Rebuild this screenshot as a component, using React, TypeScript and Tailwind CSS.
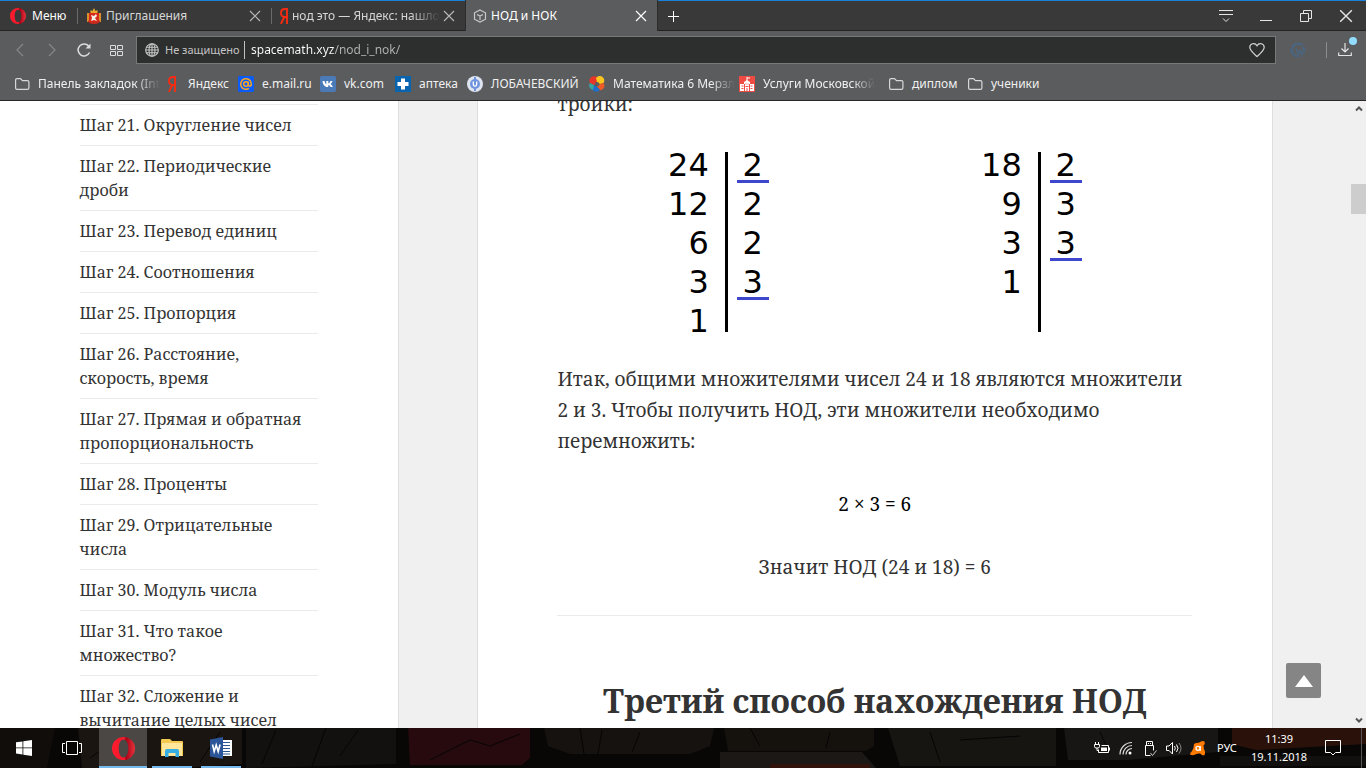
import type { ReactNode } from "react"
import clsx from "clsx"

const steps = [
    "Шаг 21. Округление чисел",
    "Шаг 22. Периодические дроби",
    "Шаг 23. Перевод единиц",
    "Шаг 24. Соотношения",
    "Шаг 25. Пропорция",
    "Шаг 26. Расстояние, скорость, время",
    "Шаг 27. Прямая и обратная пропорциональность",
    "Шаг 28. Проценты",
    "Шаг 29. Отрицательные числа",
    "Шаг 30. Модуль числа",
    "Шаг 31. Что такое множество?",
    "Шаг 32. Сложение и вычитание целых чисел",
]

/* ---------- icons ---------- */

const CloseIcon = ({ className }: { className?: string }) => (
    <svg className={clsx("h-3 w-3 shrink-0", className)} viewBox="0 0 12 12" stroke="currentColor" fill="none">
        <path d="M1 1l10 10M11 1L1 11" strokeWidth="1.2" />
    </svg>
)

const OperaIcon = ({ className, id }: { className?: string; id: string }) => (
    <svg className={className} viewBox="0 0 24 24">
        <defs>
            <linearGradient id={id} x1="0" y1="0" x2="1" y2="0">
                <stop offset="0" stopColor="#ff1b2d" />
                <stop offset="0.550" stopColor="#f01a2b" />
                <stop offset="0.600" stopColor="#a70014" />
                <stop offset="1" stopColor="#e8323c" />
            </linearGradient>
        </defs>
        <path
            d="M12 0a12 12 0 1 0 0 24a12 12 0 1 0 0-24zM12 2.700c3.200 0 5 4.200 5 9.300s-1.800 9.300-5 9.300-5-4.200-5-9.300 1.800-9.300 5-9.300z"
            fill={`url(#${id})`}
            fillRule="evenodd"
        />
    </svg>
)

const YandexIcon = () => (
    <svg className="h-4 w-2 shrink-0" viewBox="0 0 8 16" fill="none" stroke="#f52c12" strokeWidth="1.900">
        <path d="M7 16V1H5C2.300 1 1 2.600 1 5s1.300 4 3.500 4H7M4.300 9L.9 16" />
    </svg>
)

const FolderIcon = () => (
    <svg className="h-4 w-4 shrink-0" viewBox="0 0 16 16" fill="none" stroke="#d8d8d8" strokeWidth="1.200">
        <path d="M1.600 4q0-1.400 1.400-1.400h3.500l2 2H13.500q1.400 0 1.400 1.400v6q0 1.400-1.400 1.400H3q-1.400 0-1.400-1.400z" />
    </svg>
)

const CrestIcon = () => (
    <svg className="h-4 w-4 shrink-0" viewBox="0 0 16 16">
        <path d="M4.500 5V2l2 1L8 0l1.500 3 2-1v3z" fill="#e8a92c" />
        <path d="M1 5h3v9H1zM12 5h3v9h-3z" fill="#d9912c" />
        <path d="M3 5h10v9l-5 2-5-2z" fill="#d8281b" />
        <path d="M5 7l3 1 2-2 1 2-2 2 2 3-3-1-3 1 1-3z" fill="#f3eee6" />
        <path d="M2 13l3 2h6l3-2" stroke="#c32b20" strokeWidth="1.500" fill="none" />
    </svg>
)

const CubeIcon = () => (
    <svg className="h-[14px] w-[14px] shrink-0" viewBox="0 0 14 14" fill="none" stroke="#c9c9c9" strokeWidth="1.200">
        <path d="M7 1l5.500 2.800v6.400L7 13l-5.500-2.800V3.800zM4 5.500l3 1.500 3-1.500M7 7v4" />
    </svg>
)

const MailIcon = () => (
    <svg className="h-4 w-4 shrink-0" viewBox="0 0 16 16" fill="none" stroke="#ffa51f" strokeWidth="1.500">
        <rect width="16" height="16" rx="1.500" fill="#0b5cf7" stroke="none" />
        <circle cx="8" cy="8" r="2.300" />
        <path d="M10.300 5.700v3q0 1.400 1.200 1.400c1.400 0 1.800-1.400 1.800-2.100A5.300 5.300 0 1 0 11 12.400" />
    </svg>
)

const VkIcon = () => (
    <svg className="h-4 w-4 shrink-0" viewBox="0 0 16 16">
        <rect width="16" height="16" rx="2" fill="#4a7ab8" />
        <path d="M2.500 5h2c.3 1.500 1 3 1.800 3.300V5h2v2.600c1-.3 1.700-1.400 2.200-2.600h2c-.2 1-1.200 2.300-2 3 .9.600 1.900 1.700 2.300 3h-2.200c-.4-.9-1.200-1.800-2.300-2v2h-.8C4.700 11 2.800 8.600 2.500 5z" fill="#fff" />
    </svg>
)

const PharmacyIcon = () => (
    <svg className="h-4 w-4 shrink-0" viewBox="0 0 16 16">
        <rect width="16" height="16" fill="#0a65ae" />
        <path d="M6 2.500h4V6h3.500v4H10v3.500H6V10H2.500V6H6z" fill="#fff" />
    </svg>
)

const LobIcon = () => (
    <svg className="h-4 w-4 shrink-0" viewBox="0 0 16 16">
        <circle cx="8" cy="8" r="8" fill="#dfe4f1" />
        <circle cx="8" cy="8" r="5" fill="#6f93dd" />
        <path d="M8 1v14" stroke="#6f93dd" strokeWidth="2" />
        <path d="M6.300 5.500v3q0 1.700 1.700 1.700t1.700-1.700v-3" fill="none" stroke="#fff" strokeWidth="1.300" />
    </svg>
)

const SwirlIcon = () => (
    <svg className="h-4 w-4 shrink-0" viewBox="0 0 16 16">
        <path d="M1 7a4.500 4.500 0 0 1 8-4.500L8 6 5 9z" fill="#e8352a" />
        <path d="M7 2a4.500 4.500 0 0 1 7.500 5L11 8 8 6z" fill="#f7c51e" />
        <path d="M14.500 7a4.500 4.500 0 0 1-5 7L8 11l3-3z" fill="#ee5a28" />
        <path d="M11 13.500A4.500 4.500 0 0 1 3 13l2-4 3 2z" fill="#1d6fc9" />
        <path d="M4 14A4.500 4.500 0 0 1 1 7l4 2z" fill="#37a6a0" />
        <circle cx="8" cy="8" r="2" fill="#5b5c5e" />
    </svg>
)

const SchoolIcon = () => (
    <svg className="h-4 w-4 shrink-0" viewBox="0 0 16 16">
        <rect width="16" height="16" fill="#ee4b45" />
        <path d="M1 8h4V6l3-2 3 2v2h4v7H1z" fill="#fff" />
        <path d="M8 5V1M8 2h3" stroke="#fff" />
        <path d="M2.500 10h2M2.500 12.500h2M6.500 8h1M8.500 8h1M6.500 10.500h3M11.500 10h2M11.500 12.500h2M8 12v3M5.500 8v7M10.500 8v7" stroke="#ee4b45" />
    </svg>
)

const bookmarks: { label: string; icon: ReactNode; width: string; fade?: boolean }[] = [
    { label: "Панель закладок (Int", icon: <FolderIcon />, width: "w-[150px]", fade: true },
    { label: "Яндекс", icon: <YandexIcon />, width: "w-[74px]" },
    { label: "e.mail.ru", icon: <MailIcon />, width: "w-[82px]" },
    { label: "vk.com", icon: <VkIcon />, width: "w-[75px]" },
    { label: "аптека", icon: <PharmacyIcon />, width: "w-[72px]" },
    { label: "ЛОБАЧЕВСКИЙ", icon: <LobIcon />, width: "w-[122px]" },
    { label: "Математика 6 Мерзл", icon: <SwirlIcon />, width: "w-[150px]", fade: true },
    { label: "Услуги Московской", icon: <SchoolIcon />, width: "w-[149px]", fade: true },
    { label: "диплом", icon: <FolderIcon />, width: "w-[79px]" },
    { label: "ученики", icon: <FolderIcon />, width: "w-[79px]" },
]

const fadeMask = "[mask-image:linear-gradient(to_right,black_80%,transparent)]"

/* ---------- browser chrome ---------- */

const Tab = ({ icon, title, width, active }: { icon: ReactNode; title: string; width: string; active?: boolean }) => (
    <div
        className={clsx(
            "flex items-center pr-[10px] text-xs",
            width,
            active ? "-my-px gap-2 border-x border-[#2b2b2b] bg-[#5b5c5e] pl-[7px] text-white" : "gap-2 text-[#d6d6d6]",
        )}
    >
        {!active && <span className="h-4 w-px shrink-0 bg-[#6a6a6a]" />}
        <button className="flex min-w-0 grow items-center gap-1">
            {icon}
            <span className={clsx("whitespace-nowrap", title.length > 20 && fadeMask)}>{title}</span>
        </button>
        <button aria-label="Закрыть вкладку"><CloseIcon className={active ? "text-white" : "text-[#b5b5b5]"} /></button>
    </div>
)

const TabBar = () => (
    <div className="flex h-[31px] items-stretch border-t border-b border-t-[#1a82d8] border-b-[#232323] bg-[#393939]">
        <button className="flex w-[77px] shrink-0 items-center gap-[6px] pl-[10px] text-xs text-white">
            <OperaIcon id="operaMenu" className="h-4 w-4" />
            Меню
        </button>
        <Tab icon={<CrestIcon />} title="Приглашения" width="w-[194px]" />
        <Tab icon={<YandexIcon />} title="нод это — Яндекс: нашло" width="w-[194px]" />
        <Tab icon={<CubeIcon />} title="НОД и НОК" width="w-[193px]" active />
        <button aria-label="Новая вкладка" className="flex w-[30px] items-center justify-center text-white">
            <svg className="h-3 w-3" viewBox="0 0 12 12" stroke="currentColor"><path d="M6.500 1v11M1 6.500h11" /></svg>
        </button>
        <div className="ml-auto flex items-center text-[#e6e6e6]">
            <button aria-label="Меню вкладок" className="flex w-10 justify-center">
                <svg className="h-[14px] w-[14px]" viewBox="0 0 14 14" stroke="currentColor" fill="none">
                    <path d="M0 1.500h14M0 5.500h14M4 9.500l3 3 3-3" />
                </svg>
            </button>
            <button aria-label="Свернуть" className="flex w-10 justify-center">
                <svg className="h-3 w-3" viewBox="0 0 12 12" stroke="currentColor"><path d="M0 10.500h12" /></svg>
            </button>
            <button aria-label="Окно" className="flex w-10 justify-center">
                <svg className="h-3 w-3" viewBox="0 0 12 12" stroke="currentColor" fill="none">
                    <path d="M.5 3.500h8v8h-8zM3.500 3.500v-3h8v8h-3" />
                </svg>
            </button>
            <button aria-label="Закрыть" className="flex w-10 justify-center">
                <CloseIcon className="h-[14px] w-[14px]" />
            </button>
        </div>
    </div>
)

const Toolbar = () => (
    <div className="flex h-[38px] items-center">
        <div className="flex w-[136px] shrink-0 items-center text-[#dcdcdc]">
            <button aria-label="Назад" className="flex w-10 justify-center text-[#858585]">
                <svg className="h-[14px] w-2" viewBox="0 0 8 14" fill="none" stroke="currentColor" strokeWidth="1.300"><path d="M7 1L1 7l6 6" /></svg>
            </button>
            <button aria-label="Вперёд" className="flex w-6 justify-center text-[#858585]">
                <svg className="h-[14px] w-2" viewBox="0 0 8 14" fill="none" stroke="currentColor" strokeWidth="1.300"><path d="M1 1l6 6-6 6" /></svg>
            </button>
            <button aria-label="Обновить" className="flex w-10 justify-center">
                <svg className="h-4 w-4" viewBox="0 0 16 16" fill="none" stroke="currentColor" strokeWidth="1.500">
                    <path d="M13.500 10.500A6 6 0 1 1 13 4.500" /><path d="M14.500 1.500v5h-5z" fill="currentColor" stroke="none" />
                </svg>
            </button>
            <button aria-label="Экспресс-панель" className="flex w-6 justify-center">
                <svg className="h-[11px] w-[13px]" viewBox="0 0 13 11" fill="none" stroke="currentColor">
                    <path d="M.5.5h5v4h-5zM7.500.5h5v4h-5zM.5 6.500h5v4h-5zM7.500 6.500h5v4h-5z" />
                </svg>
            </button>
        </div>
        <div className="flex h-7 grow items-center border border-[#77787a] bg-[#2d2e2e] pr-[10px] pl-2 text-xs">
            <svg className="h-[14px] w-[14px] shrink-0" viewBox="0 0 14 14" fill="none" stroke="#c8c8c8" strokeWidth="1.100">
                <circle cx="7" cy="7" r="6.300" /><ellipse cx="7" cy="7" rx="3" ry="6.300" />
                <path d="M7 .7v12.600M1.500 4.200h11M.7 7h12.600M1.500 9.800h11" />
            </svg>
            <span className="ml-[6px] w-[80px] shrink-0 border-r border-[#c0c0c0] text-[11px] leading-[18px] whitespace-nowrap text-[#c4c4c4]">
                Не защищено
            </span>
            {/* the host part of the address is brighter than the path */}
            <input
                aria-label="Адрес"
                defaultValue="spacemath.xyz/nod_i_nok/"
                className="ml-[6px] min-w-0 grow bg-[linear-gradient(to_right,#ffffff_84px,#b4b4b4_84px)] bg-clip-text leading-5 text-transparent outline-none"
            />
            <svg className="h-4 w-4 shrink-0" viewBox="0 0 16 16" fill="none" stroke="#d4d4d4" strokeWidth="1.200">
                <path d="M8 14.500C4 11 .8 8.500.8 5.300.8 1.300 6 .3 8 3.700c2-3.400 7.200-2.400 7.200 1.600C15.200 8.500 12 11 8 14.500z" />
            </svg>
        </div>
        <div className="flex w-[90px] shrink-0 items-center">
            <svg className="ml-[14px] h-4 w-4" viewBox="0 0 16 16" fill="none" stroke="#4a6682">
                <circle cx="8" cy="8" r="7" strokeWidth="1.500" strokeDasharray="1.600 1.600" />
                <path d="M12 3.500A6 6 0 1 0 8 14" strokeWidth="1.800" />
                <path d="M6 6.500l2.500 5.500 1.500-3 1.500 3L14 5" strokeWidth="1.600" />
            </svg>
            <span className="ml-5 h-4 w-px bg-[#8c8c8c]" />
            <button aria-label="Загрузки" className="relative ml-[11px]">
                <svg className="h-[14px] w-[14px]" viewBox="0 0 14 14" fill="none" stroke="#e4e4e4" strokeWidth="1.200">
                    <path d="M7 0v8.500M3.500 5.500L7 9l3.500-3.500M.7 9.500v3h12.600v-3" />
                </svg>
                <span className="absolute -top-[6px] left-[11px] h-2 w-2 rounded-full bg-[#92dcff]" />
            </button>
        </div>
    </div>
)

const Bookmarks = () => (
    <div className="flex h-[31px] items-center pb-[2px] pl-[14px] text-xs text-[#f0f0f0]">
        {bookmarks.map((b) => (
            <a key={b.label} href="#" className={clsx("flex shrink-0 items-center gap-2", b.width)}>
                <span className="flex w-4 shrink-0 justify-center">{b.icon}</span>
                <span className={clsx("whitespace-nowrap", b.fade && fadeMask)}>{b.label}</span>
            </a>
        ))}
    </div>
)

/* ---------- page ---------- */

type Factor = { n: string; d?: string; mark?: boolean }

const first: Factor[] = [
    { n: "24", d: "2", mark: true },
    { n: "12", d: "2" },
    { n: "6", d: "2" },
    { n: "3", d: "3", mark: true },
    { n: "1" },
]

const second: Factor[] = [
    { n: "18", d: "2", mark: true },
    { n: "9", d: "3" },
    { n: "3", d: "3", mark: true },
    { n: "1" },
]

const FactorTable = ({ rows }: { rows: Factor[] }) => (
    <div className="flex text-black">
        <div className="w-[57px] pr-4 text-right">
            {rows.map((r, i) => <div key={i} className="h-[39px]">{r.n}</div>)}
        </div>
        <div className="mt-[6px] h-[180px] w-[3px] bg-black" />
        <div className="ml-[9px] w-8 text-center">
            {rows.map((r, i) => (
                <div key={i} className={clsx("h-[39px]", r.mark && "relative")}>
                    {r.d}
                    {r.mark && <span className="absolute bottom-[2px] left-0 h-[3px] w-8 bg-[#3f48cc]" />}
                </div>
            ))}
        </div>
    </div>
)

const Sidebar = () => (
    <aside className="w-[29.5%] shrink-0 border-r border-[#dedede] bg-white">
        <ul className="mx-[20%] pt-[3px] font-['Noto_Serif','Liberation_Serif',serif] text-base leading-6 text-[#333]">
            {steps.map((s) => (
                <li key={s} className="border-t border-[#eaeaea] py-2">
                    <a href="#">{s}</a>
                </li>
            ))}
        </ul>
    </aside>
)

const Article = () => (
    <main className="min-w-0 grow px-[5.8%]">
        <article className="-mt-3 min-h-[700px] border-x border-[#dedede] bg-white px-[10%] font-['Noto_Serif','Liberation_Serif',serif] text-[19px] leading-[31px] text-[#333]">
            <p>тройки:</p>
            <div className="mt-[26px] mb-[23px] flex justify-center gap-[212px] font-['DejaVu_Sans',sans-serif] text-[32px] leading-[39px]">
                <FactorTable rows={first} />
                <FactorTable rows={second} />
            </div>
            <p>
                Итак, общими множителями чисел 24 и 18 являются множители 2 и 3. Чтобы получить НОД, эти множители необходимо
                перемножить:
            </p>
            <p className="mt-8 text-center text-black">2 × 3 = 6</p>
            <p className="mt-8 text-center">Значит НОД (24 и 18) = 6</p>
            <hr className="mt-8 border-[#eaeaea]" />
            <h2 className="mt-16 text-center text-[32px] leading-[42px] font-bold whitespace-nowrap">Третий способ нахождения НОД</h2>
        </article>
    </main>
)

const ScrollBar = () => (
    <div className="flex w-[15px] shrink-0 flex-col items-center bg-[#f0f0f0] text-[#555]">
        <svg className="mt-1 h-2 w-2" viewBox="0 0 8 8" fill="none" stroke="currentColor" strokeWidth="2"><path d="M1 5.500l3-3 3 3" /></svg>
        <div className="mt-[71px] h-[30px] w-full bg-[#cdcdcd]" />
        <svg className="mt-auto mb-1 h-2 w-2" viewBox="0 0 8 8" fill="none" stroke="currentColor" strokeWidth="2"><path d="M1 2.500l3 3 3-3" /></svg>
    </div>
)

/* ---------- taskbar ---------- */

const WoodBackdrop = () => (
    <svg className="absolute inset-0 h-full w-full" viewBox="0 0 1366 40" preserveAspectRatio="none">
        <rect width="1366" height="40" fill="#080706" />
        <path d="M0 0h55l-8 40H0z" fill="#100d0b" />
        <path d="M78 0h164v36l-60 4H82z" fill="#1a1511" />
        <path d="M246 0h150v36l-150 4z" fill="#13110f" />
        <path d="M408 0h122v30l-8 7H410z" fill="#260a0e" />
        <path d="M544 0h170l-4 18-20 8h-120l-22-8z" fill="#16120f" />
        <path d="M724 0h150v18l-8 5H728z" fill="#15120e" />
        <path d="M720 24h142l14 16H720z" fill="#1b1816" />
        <path d="M770 36h100v4H770z" fill="#32130c" />
        <path d="M888 0h168v38H900z" fill="#171512" />
        <path d="M1064 0h154v24l-90 8h-60z" fill="#181614" />
        <path d="M1232 0h134v16l-110 6-24-6z" fill="#2a120a" />
        <path d="M1220 28h146v10h-146z" fill="#12100e" />
        <path d="M90 30L130 2M200 34l20-30M262 36l14-34M312 38l14-38M340 28l18-26M430 32l40-20 20 6 30-12M580 0l4 26M602 2l-4 24M640 4l-8 20M750 0l10 18M830 4l-4 16M930 4l10 30M960 12l60-4M1100 4l10 22" stroke="#050505" fill="none" />
    </svg>
)

const TaskButton = ({ label, children, active, line }: { label: string; children: ReactNode; active?: boolean; line?: boolean }) => (
    <button aria-label={label} className={clsx("flex h-full w-12 flex-col items-center", active && "bg-[#4a4745]")}>
        <span className="flex grow items-center">{children}</span>
        {line && <span className={clsx("-mt-[2px] h-[2px] bg-[#76b9ed]", active ? "w-full" : "w-10")} />}
    </button>
)

const Taskbar = () => (
    <footer className="relative h-10 shrink-0 overflow-hidden bg-black text-xs text-white">
        <WoodBackdrop />
        <div className="relative flex h-full items-center">
            <TaskButton label="Пуск">
                <svg className="h-4 w-4" viewBox="0 0 16 16" fill="#fff">
                    <path d="M0 2.300l6.500-.9v6.100H0zM7.300 1.300L16 0v7.500H7.300zM0 8.300h6.500v6.200L0 13.600zM7.300 8.300H16V16l-8.700-1.300z" />
                </svg>
            </TaskButton>
            <TaskButton label="Представление задач">
                <svg className="h-4 w-5" viewBox="0 0 20 16" fill="none" stroke="#fff">
                    <path d="M4.500 1.500h11v13h-11zM3 3.500H.5v9H3M17 3.500h2.500v9H17" />
                </svg>
            </TaskButton>
            <div className="ml-[3px] flex h-full gap-px">
                <TaskButton label="Opera" active line><OperaIcon id="operaTask" className="h-[23px] w-[23px]" /></TaskButton>
                <TaskButton label="Проводник" line>
                    <svg className="h-[18px] w-[22px]" viewBox="0 0 22 18">
                        <path d="M0 1q0-1 1-1h8l2 2h10q1 0 1 1v14H0z" fill="#f3c951" />
                        <path d="M1 4h20v13H1z" fill="#ffe69a" />
                        <path d="M4 18v-6q0-2 2-2h10q2 0 2 2v6h-3.500v-4h-7v4z" fill="#34aee3" />
                    </svg>
                </TaskButton>
                <TaskButton label="Word" line>
                    <svg className="h-[22px] w-[22px]" viewBox="0 0 22 22">
                        <path d="M12 3h10v16H12z" fill="#fff" />
                        <path d="M13 5.500h7M13 8.500h7M13 11.500h7M13 14.500h7M13 17h7" stroke="#2a5699" />
                        <path d="M0 2.500L13 0v22L0 19.500z" fill="#2a5699" />
                        <path d="M2.500 7.500l1.700 7 2-6.500 2 6.500 1.900-7" fill="none" stroke="#fff" strokeWidth="1.600" />
                    </svg>
                </TaskButton>
            </div>
            <div className="ml-auto flex h-full items-center">
                <div className="flex items-center gap-2 pr-[11px]">
                    <svg className="h-4 w-4" viewBox="0 0 16 16" fill="none" stroke="#fff">
                        <path d="M4.500 9.500v3h10v-7h-7M15.500 7.500v3M1.500 2v2M4.500 2v2M.5 4.500h5v2q0 1.500-1.500 1.500H2Q.5 8 .5 6.500zM3 8v2.500h1.500" />
                        <path d="M7 7.500h6v3.500H7z" fill="#fff" stroke="none" />
                    </svg>
                    <svg className="h-4 w-4" viewBox="0 0 16 16" fill="none" stroke="#ddd" strokeWidth="1.200">
                        <path d="M2 14.500A12 12 0 0 1 14 2.500M5 14.500A9 9 0 0 1 14 5.500M8 14.500A6 6 0 0 1 14 8.500" />
                        <circle cx="12" cy="13" r="1.500" fill="#fff" stroke="none" />
                    </svg>
                    <svg className="h-[17px] w-4" viewBox="0 0 16 17" fill="none" stroke="#fff">
                        <path d="M4.500 5.500v-4h6v4M3.500 5.500h8v5M3.500 5.500v10h5M6.500 3v1M8.500 3v1" />
                        <path d="M8.500 13l2 2.500 4-5" stroke="#ccc" />
                    </svg>
                    <svg className="h-4 w-4" viewBox="0 0 16 16" fill="none" stroke="#fff">
                        <path d="M.5 6v4.500H3L6.500 14V2.500L3 6z" />
                        <path d="M8.500 6q1.500 2 0 4.500M10.500 4.500q3 3.800 0 7.500" />
                        <path d="M13 3q4 5.200 0 10.500" stroke="#888" />
                    </svg>
                    <svg className="h-4 w-4" viewBox="0 0 16 16">
                        <path d="M6 3Q9 3 11 1.500q2-1 3.500 0 1 2-1 4 0 3 1.500 6 .5 2-1 4-2 0-4-2-3-.5-6 1.500-2 .5-4-.5 0-2 2-3.500Q4 8 4 4z" fill="#ff7a00" />
                        <circle cx="8" cy="8.300" r="2" fill="none" stroke="#fff" strokeWidth="1.300" />
                        <path d="M10.200 6v5" stroke="#fff" strokeWidth="1.300" />
                    </svg>
                </div>
                <button className="w-6 text-left text-[11px]">РУС</button>
                <button className="ml-2 w-[60px] text-center text-[11px] leading-[18px] whitespace-nowrap">
                    11:39<br />19.11.2018
                </button>
                <button aria-label="Уведомления" className="ml-4">
                    <svg className="h-4 w-4" viewBox="0 0 16 16" fill="none" stroke="#fff"><path d="M.5.5h15v12h-5L8 15l-2.500-2.500h-5z" /></svg>
                </button>
                <span className="mr-1 ml-5 h-full w-px bg-[#555]" />
            </div>
        </div>
    </footer>
)

export default function App() {
    return (
        <div className="flex h-screen flex-col overflow-hidden font-['Noto_Sans',sans-serif]">
            <header className="shrink-0 border-b border-[#29262a] bg-[#5b5c5e]">
                <TabBar />
                <Toolbar />
                <Bookmarks />
            </header>
            <div className="relative flex min-h-0 grow overflow-hidden bg-[#f0f0f0]">
                <div className="flex min-w-0 grow">
                    <Sidebar />
                    <Article />
                </div>
                <ScrollBar />
                <button aria-label="Наверх" className="absolute right-[45px] bottom-[30px] flex h-[35px] w-[35px] items-center justify-center rounded-xs bg-[#858585]">
                    <svg className="h-3 w-[18px]" viewBox="0 0 18 12" fill="#fff"><path d="M9 0l9 12H0z" /></svg>
                </button>
            </div>
            <Taskbar />
        </div>
    )
}
